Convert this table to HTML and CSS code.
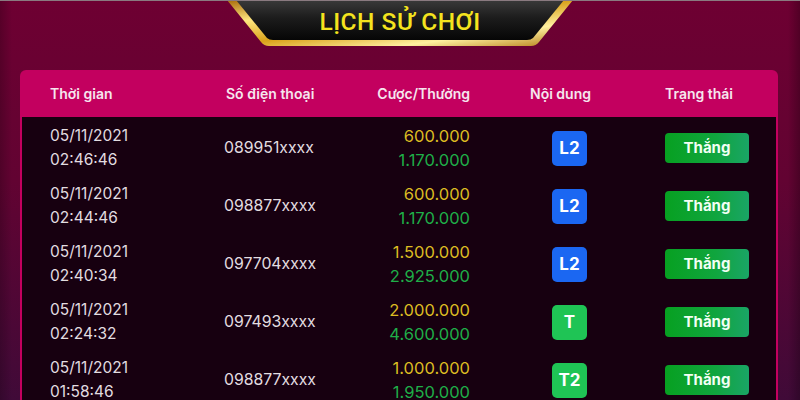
FILE: index.html
```html
<!DOCTYPE html>
<html lang="vi">
<head>
<meta charset="utf-8">
<title>Lịch sử chơi</title>
<link rel="stylesheet" href="styles.css">
</head>
<body>
<div class="page">
  <div class="banner">
    <svg class="banner-bg" viewBox="0 0 346 48" width="346" height="48" aria-hidden="true">
      <defs>
        <linearGradient id="gold" x1="0" y1="0" x2="1" y2="1">
          <stop offset="0" stop-color="#a86a08"/>
          <stop offset="0.25" stop-color="#ffe680"/>
          <stop offset="0.5" stop-color="#d9a21a"/>
          <stop offset="0.75" stop-color="#fff0a0"/>
          <stop offset="1" stop-color="#b07810"/>
        </linearGradient>
        <linearGradient id="dark" x1="0" y1="0" x2="0" y2="1">
          <stop offset="0" stop-color="#3a3a3a"/>
          <stop offset="0.45" stop-color="#1c1c1c"/>
          <stop offset="1" stop-color="#060606"/>
        </linearGradient>
      </defs>
      <path d="M0 0 H346 L312 42 Q309 46 304 46 H42 Q37 46 34 42 Z" fill="url(#gold)"/>
      <path d="M9 0 H337 L306 38 Q304 40 300 40 H46 Q42 40 40 38 Z" fill="url(#dark)"/>
    </svg>
    <h1 class="title">LỊCH SỬ CHƠI</h1>
  </div>

  <div class="card">
    <div class="row head">
      <div class="c-time">Thời gian</div>
      <div class="c-phone">Số điện thoại</div>
      <div class="c-amt">Cược/Thưởng</div>
      <div class="c-content">Nội dung</div>
      <div class="c-status">Trạng thái</div>
    </div>
    <div class="body">
      <div class="row">
        <div class="c-time"><div>05/11/2021</div><div>02:46:46</div></div>
        <div class="c-phone">089951xxxx</div>
        <div class="c-amt"><div class="bet">600.000</div><div class="win">1.170.000</div></div>
        <div class="c-content"><span class="badge blue">L2</span></div>
        <div class="c-status"><span class="btn">Thắng</span></div>
      </div>
      <div class="row">
        <div class="c-time"><div>05/11/2021</div><div>02:44:46</div></div>
        <div class="c-phone">098877xxxx</div>
        <div class="c-amt"><div class="bet">600.000</div><div class="win">1.170.000</div></div>
        <div class="c-content"><span class="badge blue">L2</span></div>
        <div class="c-status"><span class="btn">Thắng</span></div>
      </div>
      <div class="row">
        <div class="c-time"><div>05/11/2021</div><div>02:40:34</div></div>
        <div class="c-phone">097704xxxx</div>
        <div class="c-amt"><div class="bet">1.500.000</div><div class="win">2.925.000</div></div>
        <div class="c-content"><span class="badge blue">L2</span></div>
        <div class="c-status"><span class="btn">Thắng</span></div>
      </div>
      <div class="row">
        <div class="c-time"><div>05/11/2021</div><div>02:24:32</div></div>
        <div class="c-phone">097493xxxx</div>
        <div class="c-amt"><div class="bet">2.000.000</div><div class="win">4.600.000</div></div>
        <div class="c-content"><span class="badge green">T</span></div>
        <div class="c-status"><span class="btn">Thắng</span></div>
      </div>
      <div class="row">
        <div class="c-time"><div>05/11/2021</div><div>01:58:46</div></div>
        <div class="c-phone">098877xxxx</div>
        <div class="c-amt"><div class="bet">1.000.000</div><div class="win">1.950.000</div></div>
        <div class="c-content"><span class="badge green">T2</span></div>
        <div class="c-status"><span class="btn">Thắng</span></div>
      </div>
    </div>
  </div>
</div>
</body>
</html>
```

FILE: styles.css
```css
* { box-sizing: border-box; }
html, body { margin: 0; padding: 0; }
body {
  width: 800px;
  height: 400px;
  overflow: hidden;
  font-family: Inter, "Noto Sans", sans-serif;
  background:
    linear-gradient(90deg, rgba(0,0,0,0.2) 0, rgba(0,0,0,0) 12px, rgba(0,0,0,0) 788px, rgba(0,0,0,0.25) 800px),
    linear-gradient(180deg, #6e0032 0%, #620332 45%, #400a38 100%);
  border-top: 1px solid #8a7a80;
}
.page {
  display: flex;
  flex-direction: column;
}
.banner {
  position: relative;
  width: 346px;
  height: 48px;
  margin: -1px auto 0;
  display: flex;
  align-items: center;
  justify-content: center;
}
.banner-bg {
  position: absolute;
  left: 0;
  top: 0;
}
.title {
  position: relative;
  margin: 0 0 5px 0;
  font-family: Roboto, "Noto Sans", sans-serif;
  font-weight: 500;
  font-size: 24.5px;
  letter-spacing: 0.5px;
  color: #f4e31e;
}
.card {
  margin: 22px 22px 0 20px;
  border-radius: 6px 6px 0 0;
  overflow: hidden;
  background: #c3005f;
}
.row {
  display: grid;
  grid-template-columns: 176px 120px 124px 195px 1fr;
  align-items: center;
  padding-left: 30px;
  color: #e2dde0;
  font-size: 15.5px;
}
.head {
  height: 47px;
  font-weight: 600;
  font-size: 14px;
  color: #f6e6ee;
}
.body {
  margin: 0 2px;
  padding-top: 2px;
  background: #170010;
}
.body .row {
  height: 58px;
  padding-left: 28px;
  line-height: 24px;
}
.body .c-phone { margin-left: -2px; font-size: 15.8px; }
.c-amt { text-align: right; }
.body .c-amt { font-size: 16.5px; }
.bet { color: #dcbc22; }
.win { color: #1fae48; }
.head .c-content { padding-left: 60px; }
.body .c-content { padding-left: 82px; }
.badge {
  display: flex;
  align-items: center;
  justify-content: center;
  width: 35px;
  height: 35px;
  border-radius: 5px;
  color: #fff;
  font-weight: 700;
  font-size: 17px;
}
.blue { background: #1b67f2; }
.green { background: #1fc455; }
.btn {
  display: flex;
  align-items: center;
  justify-content: center;
  width: 84px;
  height: 30px;
  border-radius: 4px;
  background: linear-gradient(90deg, #07a021 0%, #10a53e 60%, #1aa566 100%);
  color: #f2fff4;
  font-weight: 700;
  font-size: 15px;
}
```
